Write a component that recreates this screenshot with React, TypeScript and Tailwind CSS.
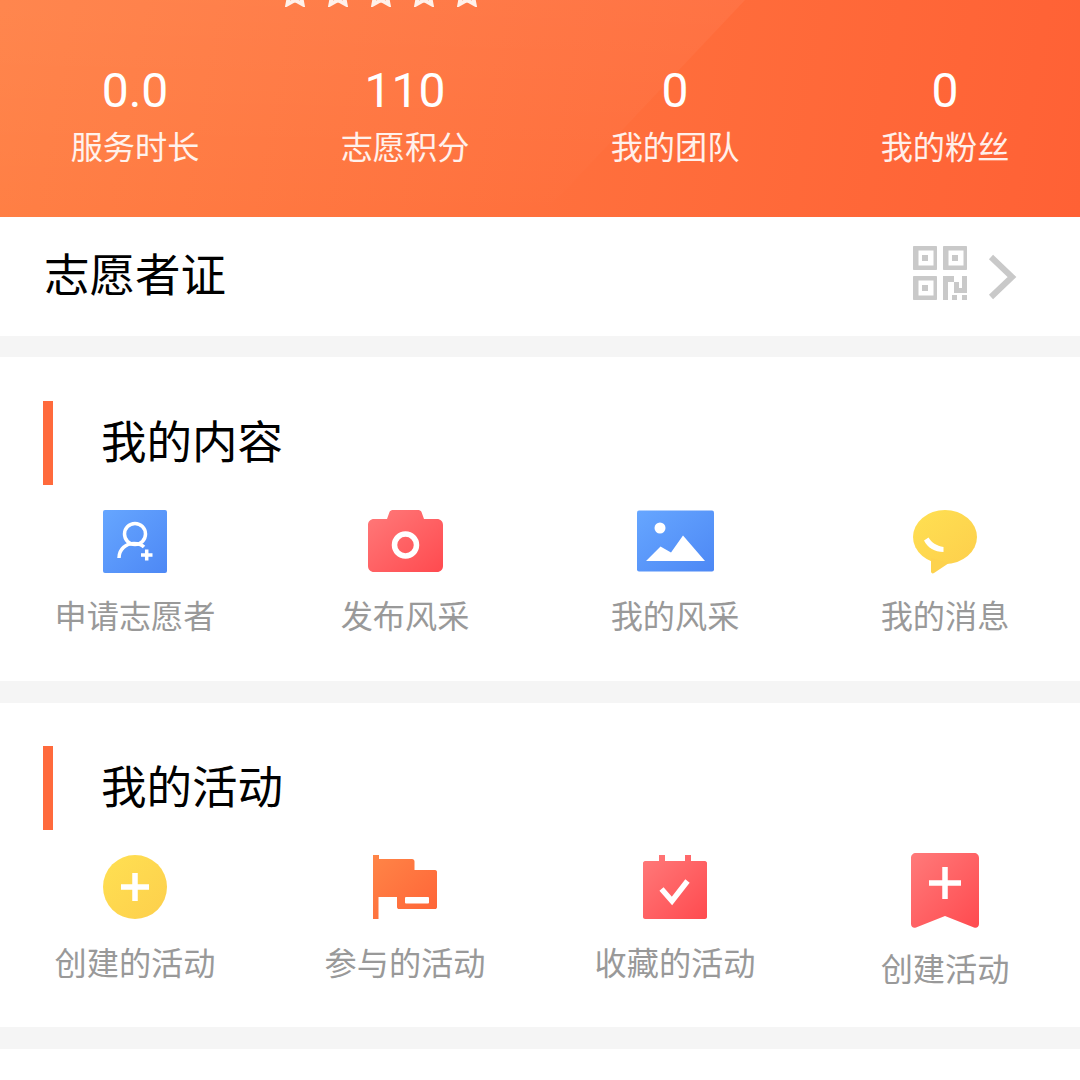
const Defs = () => (
  <svg width="0" height="0" className="absolute">
    <defs>
      <linearGradient id="blue" x1="0" y1="0" x2="1" y2="1">
        <stop offset="0" stopColor="#66a6ff" />
        <stop offset="1" stopColor="#4d88f5" />
      </linearGradient>
      <linearGradient id="red" x1="0" y1="0" x2="1" y2="1">
        <stop offset="0" stopColor="#ff7a7a" />
        <stop offset="1" stopColor="#ff4a4f" />
      </linearGradient>
      <linearGradient id="yellow" x1="0" y1="0" x2="1" y2="1">
        <stop offset="0" stopColor="#ffe052" />
        <stop offset="1" stopColor="#fdcf4c" />
      </linearGradient>
      <linearGradient id="orange" x1="0" y1="0" x2="1" y2="1">
        <stop offset="0" stopColor="#ff8547" />
        <stop offset="1" stopColor="#ff6337" />
      </linearGradient>
    </defs>
  </svg>
);

const PersonIcon = () => (
  <svg viewBox="103 510 64 63" className="w-[64px] h-[63px]">
    <rect x="103" y="510" width="64" height="63" rx="2" fill="url(#blue)" />
    <circle cx="135" cy="534" r="10.500" fill="none" stroke="#fff" strokeWidth="3.500" />
    <path d="M119 558c0-9 7-14.500 15-14.500 4 0 7.500 1 10 3.500" fill="none" stroke="#fff" strokeWidth="3.500" />
    <path d="M146.700 549.500v11M141 555h11.500" stroke="#fff" strokeWidth="3.500" fill="none" />
  </svg>
);

const CameraIcon = () => (
  <svg viewBox="368 510 75 63" className="w-[75px] h-[63px]">
    <path d="M374 519h13l2.500-7c.5-1 1.500-2 3-2h26c1.500 0 2.500 1 3 2l2.500 7h13c3.500 0 6 2.500 6 6v41c0 3.500-2.500 6-6 6h-63c-3.500 0-6-2.500-6-6v-41c0-3.500 2.500-6 6-6z" fill="url(#red)" />
    <circle cx="405.500" cy="545" r="11" fill="none" stroke="#fff" strokeWidth="5.500" />
  </svg>
);

const PhotoIcon = () => (
  <svg viewBox="637 510 77 62" className="w-[77px] h-[62px]">
    <rect x="637" y="510.500" width="77" height="61" rx="2" fill="url(#blue)" />
    <circle cx="660" cy="528" r="5.500" fill="#fff" />
    <path d="M646 561l14.500-14.500 10.500 6 12-17 22 25.500z" fill="#fff" />
  </svg>
);

const BubbleIcon = () => (
  <svg viewBox="913 510 64 64" className="w-[64px] h-[64px]">
    <ellipse cx="945" cy="537" rx="32" ry="27" fill="url(#yellow)" />
    <path d="M931 558v13.500c0 1.500 1.500 2.500 3 1.500l15-10z" fill="#fdd24e" />
    <path d="M924 540.500l4.500-3c3 5 8 8.500 15 9.500v5c-9 0-15.500-4-19.500-11.500z" fill="#fff" />
  </svg>
);

const PlusCircleIcon = () => (
  <svg viewBox="103 855 64 64" className="w-[64px] h-[64px]">
    <circle cx="135" cy="887" r="32" fill="url(#yellow)" />
    <path d="M135 873v28M121 887h28" stroke="#fff" strokeWidth="5.500" fill="none" />
  </svg>
);

const FlagIcon = () => (
  <svg viewBox="373 855 64 64" className="w-[64px] h-[64px]">
    <path d="M373 855h6v4h33c1.500 0 2.500 1 2.500 2.500V870h20.500c1.500 0 2 1 2 2v35c0 1.500-1 2-2 2h-36c-1 0-2-.5-2-2v-10h-18.500v22H373z" fill="url(#orange)" />
    <rect x="405" y="897" width="24" height="6.500" rx="1" fill="#fff" />
  </svg>
);

const CalendarIcon = () => (
  <svg viewBox="643 855 64 64" className="w-[64px] h-[64px]">
    <path d="M659 855h6v6h20v-6h6v6h14c1 0 2 1 2 2v54c0 1-1 2-2 2h-60c-1 0-2-1-2-2v-54c0-1 1-2 2-2h14z" fill="url(#red)" />
    <path d="M661.500 889l10.500 12 15.500-20" fill="none" stroke="#fff" strokeWidth="5.500" />
  </svg>
);

const BookmarkIcon = () => (
  <svg viewBox="911 853 68 75" className="w-[68px] h-[75px]">
    <path d="M916 853h58c3 0 5 2 5 5v66c0 3-2.500 4.500-5 3.500l-29-11.500-29 11.500c-2.500 1-5-.5-5-3.500v-66c0-3 2-5 5-5z" fill="url(#red)" />
    <path d="M945 867v32M929 883h32" stroke="#fff" strokeWidth="5.500" fill="none" />
  </svg>
);

const QrIcon = () => (
  <svg viewBox="913 246 54 54" className="w-[54px] h-[54px] mb-[7px]">
    <g fill="#c9c9c9" fillRule="evenodd">
      <path d="M914 246h22c.6 0 1 .4 1 1v22c0 .6-.4 1-1 1h-22c-.6 0-1-.4-1-1v-22c0-.6.400-1 1-1zm4.500 4.500v15h15v-15z" />
      <path d="M944 246h22c.6 0 1 .4 1 1v22c0 .6-.4 1-1 1h-22c-.6 0-1-.4-1-1v-22c0-.6.400-1 1-1zm4.500 4.500v15h15v-15z" />
      <path d="M914 276h22c.6 0 1 .4 1 1v22c0 .6-.4 1-1 1h-22c-.6 0-1-.4-1-1v-22c0-.6.400-1 1-1zm4.500 4.500v15h15v-15z" />
      <rect x="922" y="255" width="6" height="6" />
      <rect x="952" y="255" width="6" height="6" />
      <rect x="922" y="285" width="6" height="6" />
      <path d="M943 276h11v6h-6v18h-5z" />
      <path d="M954 282h5v6h3v-12h5v17h-13z" />
      <rect x="952" y="295" width="5" height="5" />
      <rect x="962" y="295" width="5" height="5" />
    </g>
  </svg>
);

const Chevron = () => (
  <svg viewBox="985 250 34 52" className="w-[34px] h-[52px] ml-[18px]">
    <path d="M991 256l21 20-21 20" fill="none" stroke="#c9c9c9" strokeWidth="6" />
  </svg>
);

const Star = () => (
  <svg viewBox="1 2 24 23" className="w-[28px] h-[27px] shrink-0">
    <path d="M13 2.500l3.200 6.900 7.500.9-5.500 5.200 1.400 7.400-6.600-3.700-6.600 3.700 1.400-7.400-5.500-5.200 7.500-.9z" fill="#ffa684" stroke="#fff1ea" strokeWidth="3.200" strokeLinejoin="miter" />
  </svg>
);

const stats = [
  ["0.0", "服务时长"],
  ["110", "志愿积分"],
  ["0", "我的团队"],
  ["0", "我的粉丝"],
];

const contentItems = [
  { icon: <PersonIcon />, label: "申请志愿者" },
  { icon: <CameraIcon />, label: "发布风采" },
  { icon: <PhotoIcon />, label: "我的风采" },
  { icon: <BubbleIcon />, label: "我的消息" },
];

const Label = ({ text, cls }: { text: string; cls: string }) => (
  <div className={`text-[32.2px] leading-[45px] text-[#999999] whitespace-nowrap ${cls}`}>{text}</div>
);

const SectionTitle = ({ text }: { text: string }) => (
  <div className="flex h-[84px] items-center pl-[43px]">
    <div className="h-[84px] w-[10px] bg-[#ff6a3c]" />
    <div className="ml-[48px] pb-[9px] text-[45.5px] leading-[60px] text-black">{text}</div>
  </div>
);

export default function App() {
  return (
    <div
      className="h-[1080px] w-[1080px] overflow-hidden bg-[#f5f5f5]"
      style={{ fontFamily: '"Noto Sans CJK SC", "Noto Sans", sans-serif' }}
    >
      <Defs />
      <header className="relative h-[217px] overflow-hidden bg-[linear-gradient(100deg,#ff8045,#ff6135)]">
        <div className="absolute inset-0 bg-gradient-to-b from-white/5 to-white/0 [clip-path:polygon(0_0,745px_0,540px_100%,0_100%)]" />
        <div className="relative">
          <div className="flex h-[7px] items-end gap-[15px] overflow-hidden pl-[281px]">
            <Star />
            <Star />
            <Star />
            <Star />
            <Star />
          </div>
          <div className="mt-[56px] grid grid-cols-4 text-center text-white">
            {stats.map(([v, l]) => (
              <div key={l} className="flex flex-col items-center">
                <div className="text-[48px] leading-[56px] font-normal" style={{ fontFamily: "Roboto, sans-serif" }}>
                  {v}
                </div>
                <div className="mt-[4px] text-[32.2px] leading-[45px] text-white/90">{l}</div>
              </div>
            ))}
          </div>
        </div>
      </header>

      <div className="flex h-[119px] items-center bg-white pl-[44px] pr-[61px]">
        <div className="flex-1 pb-[10px] text-[45.5px] leading-[60px] text-black">志愿者证</div>
        <QrIcon />
        <Chevron />
      </div>

      <section className="mt-[21px] h-[324px] bg-white pt-[44px]">
        <SectionTitle text="我的内容" />
        <div className="mt-[25px] grid grid-cols-4">
          {contentItems.map((it) => (
            <div key={it.label} className="flex flex-col items-center">
              <div className="flex h-[63px] items-start">{it.icon}</div>
              <Label text={it.label} cls="mt-[19px]" />
            </div>
          ))}
        </div>
      </section>

      <section className="mt-[22px] h-[324px] bg-white pt-[43px]">
        <SectionTitle text="我的活动" />
        <div className="mt-[23px] grid grid-cols-4">
          <div className="flex flex-col items-center pt-[2px]">
            <PlusCircleIcon />
            <Label text="创建的活动" cls="mt-[20px]" />
          </div>
          <div className="flex flex-col items-center pt-[2px]">
            <FlagIcon />
            <Label text="参与的活动" cls="mt-[20px]" />
          </div>
          <div className="flex flex-col items-center pt-[2px]">
            <CalendarIcon />
            <Label text="收藏的活动" cls="mt-[20px]" />
          </div>
          <div className="flex flex-col items-center">
            <BookmarkIcon />
            <Label text="创建活动" cls="mt-[17px]" />
          </div>
        </div>
      </section>

      <div className="mt-[22px] h-[31px] bg-white" />
    </div>
  );
}
